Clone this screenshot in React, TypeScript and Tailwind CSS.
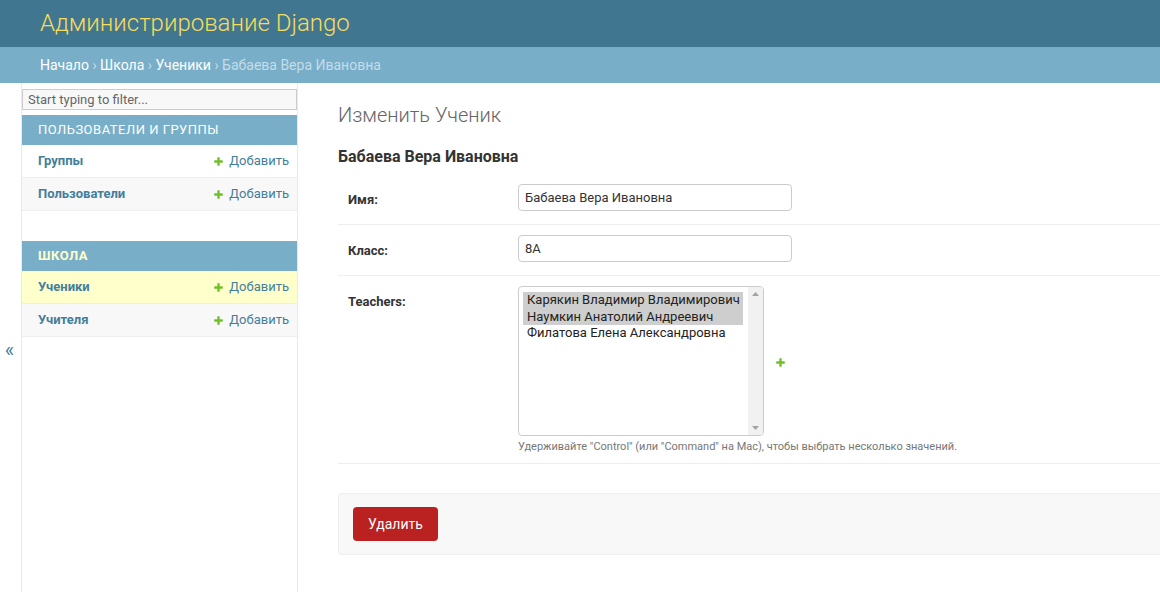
import React from "react";

const AddIcon = ({ size = 11 }: { size?: number }) => (
  <svg width={size} height={size} viewBox="0 0 1792 1792" aria-hidden="true">
    <path
      fill="#70bf2b"
      d="M1600 796v192q0 40-28 68t-68 28h-416v416q0 40-28 68t-68 28h-192q-40 0-68-28t-28-68v-416h-416q-40 0-68-28t-28-68v-192q0-40 28-68t68-28h416v-416q0-40 28-68t68-28h192q40 0 68 28t28 68v416h416q40 0 68 28t28 68z"
    />
  </svg>
);

type Row = { name: string; current?: boolean; alt?: boolean };

const Module = ({ title, current, rows }: { title: string; current?: boolean; rows: Row[] }) => (
  <div className="mb-[30px]">
    <div
      className={
        current
          ? "h-[30px] flex items-center pl-4 bg-[#79aec8] text-[13px] uppercase tracking-[0.5px] font-bold text-[#ffffcc]"
          : "h-[30px] flex items-center pl-4 bg-[#79aec8] text-[13px] uppercase tracking-[0.5px] font-normal text-white"
      }
    >
      {title}
    </div>
    {rows.map((r) => (
      <div
        key={r.name}
        className={
          r.current
            ? "h-[33px] flex items-center justify-between pl-4 pr-2 border-b border-[#eeeeee] bg-[#ffffcc]"
            : r.alt
            ? "h-[33px] flex items-center justify-between pl-4 pr-2 border-b border-[#eeeeee] bg-[#f8f8f8]"
            : "h-[33px] flex items-center justify-between pl-4 pr-2 border-b border-[#eeeeee] bg-white"
        }
      >
        <span className="font-bold text-[13px] text-[#447e9b]">{r.name}</span>
        <span className="flex items-center gap-[5px] text-[13px] text-[#447e9b]">
          <AddIcon size={11} />
          Добавить
        </span>
      </div>
    ))}
  </div>
);

export default function App() {
  return (
    <div className="min-h-[592px] h-[592px] flex flex-col overflow-hidden bg-white font-['Roboto','Noto_Sans',sans-serif] text-[13px] text-[#333]">
      {/* Header */}
      <div className="h-[47px] shrink-0 bg-[#417690] px-10 flex items-center">
        <h1 className="text-[24px] font-light text-[#f5dd5d] leading-[27px]">Администрирование Django</h1>
      </div>
      {/* Breadcrumbs */}
      <div className="h-[36px] shrink-0 bg-[#79aec8] px-10 flex items-center text-[14px] text-[#c4dce8] whitespace-pre">
        <span className="text-white">Начало</span>
        <span> › </span>
        <span className="text-white">Школа</span>
        <span> › </span>
        <span className="text-white">Ученики</span>
        <span> › </span>
        <span>Бабаева Вера Ивановна</span>
      </div>

      <div className="flex flex-1 min-h-0">
        {/* toggle */}
        <div className="w-[22px] shrink-0 border-r border-[#eaeaea] flex justify-center pt-[255px]">
          <span className="text-[20px] leading-[24px] text-[#447e9b] mr-[2px]">«</span>
        </div>
        {/* Sidebar */}
        <div className="w-[276px] shrink-0 border-r border-[#eaeaea]">
          <div className="mt-[6px] mb-[5px] h-[21px] border border-[#cccccc] bg-[#f8f8f8] px-[5px] flex items-center text-[13px] text-[#666]">
            Start typing to filter...
          </div>
          <Module
            title="Пользователи и группы"
            rows={[{ name: "Группы" }, { name: "Пользователи", alt: true }]}
          />
          <Module
            title="Школа"
            current
            rows={[{ name: "Ученики", current: true }, { name: "Учителя", alt: true }]}
          />
        </div>
        {/* Main */}
        <div className="flex-1 min-w-0 overflow-hidden pl-10 pt-5">
          <div className="mr-[-20px]">
            <h1 className="text-[20px] font-light text-[#666] leading-[24px] mb-5">Изменить Ученик</h1>
            <h2 className="text-[16px] font-bold text-[#333] leading-[19px] mb-2">Бабаева Вера Ивановна</h2>

            {/* Row: name */}
            <div className="flex border-b border-[#eeeeee] px-[10px] pt-[10px] pb-[13px]">
              <label className="w-[160px] mr-[10px] pt-[6px] font-bold text-[13px] text-[#333]">Имя:</label>
              <div className="w-[274px] h-[27px] border border-[#cccccc] rounded-[4px] px-[6px] flex items-center text-[13px] text-[#333]">
                Бабаева Вера Ивановна
              </div>
            </div>

            {/* Row: class */}
            <div className="flex border-b border-[#eeeeee] px-[10px] pt-[10px] pb-[13px]">
              <label className="w-[160px] mr-[10px] pt-[6px] font-bold text-[13px] text-[#333]">Класс:</label>
              <div className="w-[274px] h-[27px] border border-[#cccccc] rounded-[4px] px-[6px] flex items-center text-[13px] text-[#333]">
                8А
              </div>
            </div>

            {/* Row: teachers */}
            <div className="flex border-b border-[#eeeeee] px-[10px] pt-[10px] pb-[10px]">
              <label className="w-[160px] mr-[10px] pt-[6px] font-bold text-[13px] text-[#333]">Teachers:</label>
              <div>
                <div className="flex items-center">
                  <div className="w-[246px] h-[150px] border border-[#cccccc] rounded-[4px] flex overflow-hidden">
                    <div className="pt-[5px] pl-[4px]">
                      <div className="w-[220px] h-[16.5px] leading-[16.5px] pl-[4px] bg-[#cecece] text-[13px] text-[#222] whitespace-nowrap">
                        Карякин Владимир Владимирович
                      </div>
                      <div className="w-[220px] h-[16.5px] leading-[16.5px] pl-[4px] bg-[#cecece] text-[13px] text-[#222] whitespace-nowrap">
                        Наумкин Анатолий Андреевич
                      </div>
                      <div className="w-[220px] h-[16.5px] leading-[16.5px] pl-[4px] text-[13px] text-[#222] whitespace-nowrap">
                        Филатова Елена Александровна
                      </div>
                    </div>
                    <div className="flex-1" />
                    <div className="w-[15px] bg-[#f1f1f1] flex flex-col justify-between items-center py-[5px]">
                      <svg width="7" height="4" viewBox="0 0 7 4"><path d="M0 4L3.5 0L7 4Z" fill="#a3a3a3" /></svg>
                      <svg width="7" height="4" viewBox="0 0 7 4"><path d="M0 0L3.5 4L7 0Z" fill="#a3a3a3" /></svg>
                    </div>
                  </div>
                  <span className="ml-[11px] mt-[3px] flex">
                    <AddIcon size={11} />
                  </span>
                </div>
                <div className="mt-[4px] text-[11px] leading-[13px] text-[#777]">
                  Удерживайте "Control" (или "Command" на Mac), чтобы выбрать несколько значений.
                </div>
              </div>
            </div>

            {/* Submit row */}
            <div className="mt-[29px] border border-[#eeeeee] rounded-[4px] bg-[#f8f8f8] px-[14px] py-[13px] flex">
              <span className="h-[34px] px-[15px] rounded-[4px] bg-[#ba2121] text-white text-[14px] flex items-center">
                Удалить
              </span>
            </div>
          </div>
        </div>
      </div>
    </div>
  );
}
